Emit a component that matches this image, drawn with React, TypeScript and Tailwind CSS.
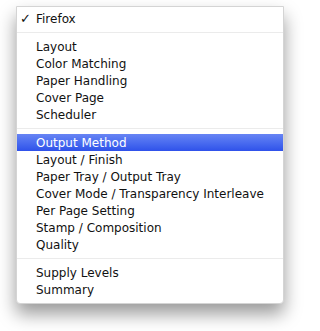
const groups: string[][] = [
  ["Layout", "Color Matching", "Paper Handling", "Cover Page", "Scheduler"],
  [
    "Output Method",
    "Layout / Finish",
    "Paper Tray / Output Tray",
    "Cover Mode / Transparency Interleave",
    "Per Page Setting",
    "Stamp / Composition",
    "Quality",
  ],
  ["Supply Levels", "Summary"],
];

function Separator() {
  return (
    <div className="h-[11px] flex items-center">
      <div className="w-full h-[2px] bg-[#ebebeb] border-b border-white" />
    </div>
  );
}

function Item({ label, active }: { label: string; active?: boolean }) {
  return (
    <div
      className={
        active
          ? "h-[17px] flex items-center pl-[19px] text-white bg-gradient-to-b from-[#6784f4] to-[#2f51ea]"
          : "h-[17px] flex items-center pl-[19px] text-[#111]"
      }
    >
      {label}
    </div>
  );
}

export default function App() {
  return (
    <div className="w-[300px] h-[331px] bg-white pt-[6px] pl-[16px] font-['DejaVu_Sans',sans-serif] text-[12px]">
      <div className="w-[268px] bg-white border border-[#d4d4d4] rounded-b-[4px] pt-[3px] pb-[5px] shadow-[0_10px_18px_rgba(0,0,0,0.4)]">
        <div className="h-[17px] flex items-center text-[#111]">
          <span className="w-[19px] pl-[3px] text-[13px] font-bold leading-none">✓</span>
          Firefox
        </div>
        {groups.map((g, i) => (
          <div key={i}>
            <Separator />
            {g.map((label) => (
              <Item key={label} label={label} active={label === "Output Method"} />
            ))}
          </div>
        ))}
      </div>
    </div>
  );
}
